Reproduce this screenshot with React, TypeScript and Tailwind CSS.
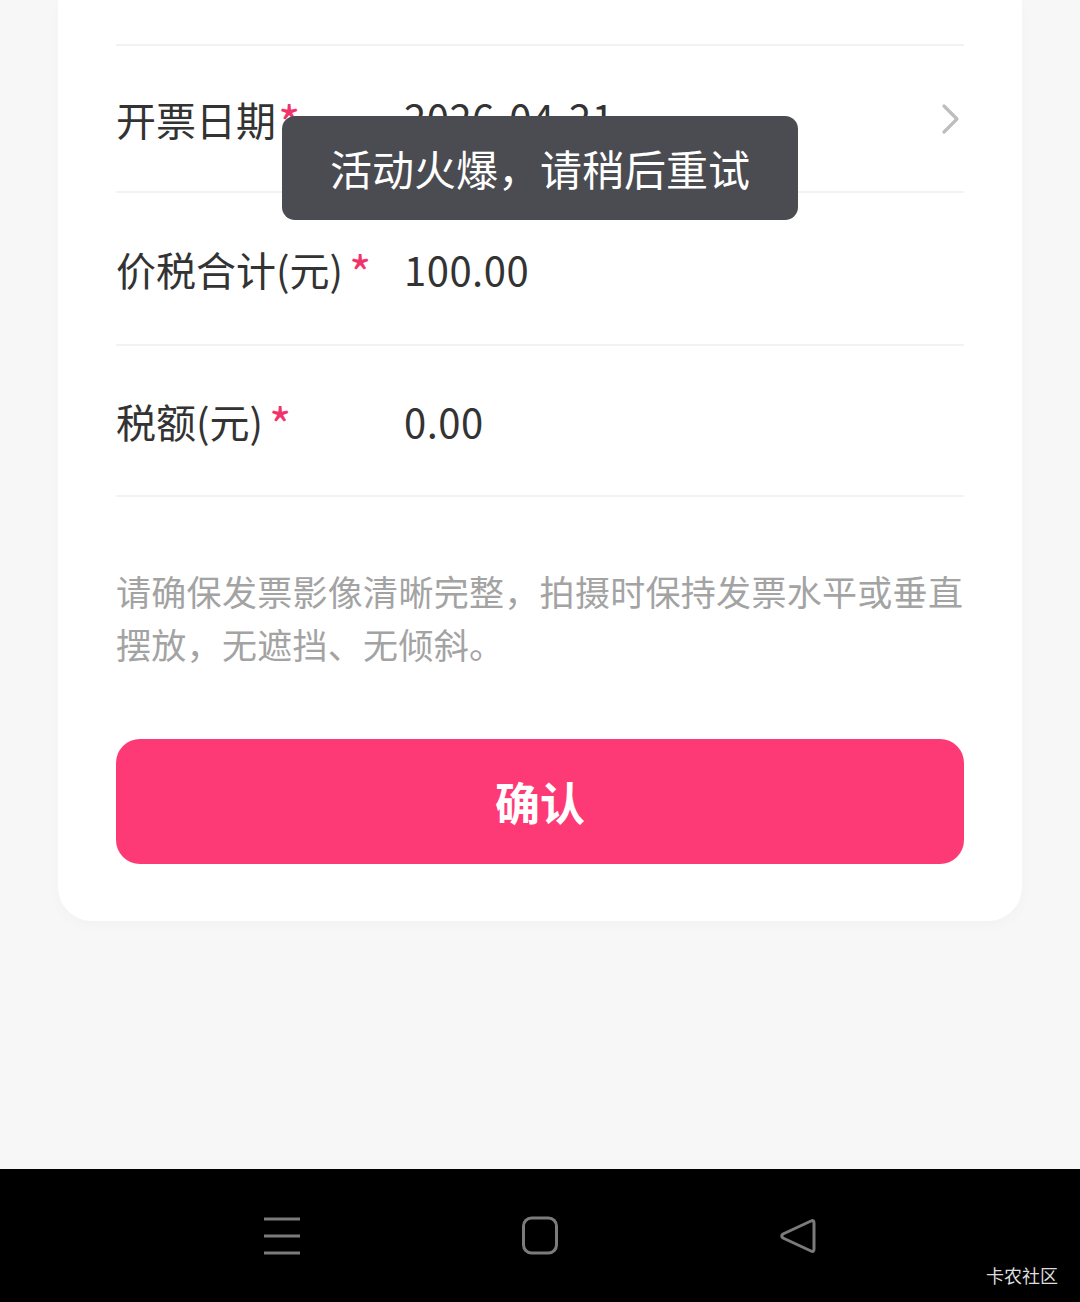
import React from 'react';

const FONT = { fontFamily: '"Noto Sans CJK SC", "Noto Sans", sans-serif' };

function Row({ label, value, tight, arrow, h }: { label: string; value: string; tight?: boolean; arrow?: boolean; h: string }) {
  return (
    <div className={`flex items-center border-b-2 border-[#f2f2f2] ${h}`}>
      <div className="w-[288px] shrink-0 text-[40px] text-[#333] leading-none flex items-center">
        <span>{label}</span>
        <span className={`text-[#f0336b] text-[48px] leading-none translate-y-[2px] ${tight ? 'ml-[2px]' : 'ml-[6px]'}`}>*</span>
      </div>
      <div className={`flex-1 text-[40px] text-[#333] leading-none tracking-[0.5px] ${arrow ? '-translate-y-[2px]' : ''}`}>{value}</div>
      {arrow && (
        <svg width="22" height="32" viewBox="0 0 22 32" className="mr-[2px]">
          <path d="M4 3 L17 16 L4 29" fill="none" stroke="#bdbdbd" strokeWidth="3.2" strokeLinecap="round" strokeLinejoin="round" />
        </svg>
      )}
    </div>
  );
}

export default function App() {
  return (
    <div className="w-[1080px] h-[1302px] flex flex-col bg-[#f7f7f7] relative overflow-hidden" style={FONT}>
      <div className="flex-1">
        <div className="mx-[58px] bg-white rounded-b-[34px] px-[58px] pb-[57px] shadow-[0_4px_14px_rgba(0,0,0,0.025)]">
          <div className="h-[46px] border-b-2 border-[#f2f2f2]" />
          <Row label="开票日期" value="2026-04-21" tight arrow h="h-[147px]" />
          <Row label="价税合计(元)" value="100.00" h="h-[153px]" />
          <Row label="税额(元)" value="0.00" h="h-[151px]" />

          <p className="mt-[67px] text-[35px] leading-[53px] text-[#a3a3a3] tracking-[0.3px]">
            请确保发票影像清晰完整，拍摄时保持发票水平或垂直摆放，无遮挡、无倾斜。
          </p>

          <button className="mt-[69px] w-full h-[125px] rounded-[24px] bg-[#fe3a76] text-white text-[45px] font-bold flex items-center justify-center">
            确认
          </button>
        </div>
      </div>

      {/* 底部导航栏 */}
      <div className="h-[133px] bg-black flex items-center justify-center relative">
        <div className="w-[258px] flex justify-center">
          <svg width="40" height="40" viewBox="0 0 40 40">
            <line x1="2" y1="3" x2="38" y2="3" stroke="#7b7b7b" strokeWidth="3" />
            <line x1="2" y1="20" x2="38" y2="20" stroke="#7b7b7b" strokeWidth="3" />
            <line x1="2" y1="37" x2="38" y2="37" stroke="#7b7b7b" strokeWidth="3" />
          </svg>
        </div>
        <div className="w-[258px] flex justify-center">
          <svg width="40" height="40" viewBox="0 0 40 40">
            <rect x="3.5" y="2" width="33" height="35" rx="8" fill="none" stroke="#7b7b7b" strokeWidth="3" />
          </svg>
        </div>
        <div className="w-[258px] flex justify-center">
          <svg width="40" height="40" viewBox="0 0 40 40">
            <path d="M33 5 Q36 3.5 36 7 L36 33 Q36 36.5 33 35 L5 22 Q2.5 20 5 18 Z" fill="none" stroke="#7b7b7b" strokeWidth="3" strokeLinejoin="round" />
          </svg>
        </div>
        <div className="absolute right-[22px] bottom-[18px] text-[18px] text-[#dddddd] leading-none">卡农社区</div>
      </div>

      {/* Toast */}
      <div className="absolute left-[282px] top-[116px] w-[516px] h-[104px] rounded-[13px] bg-[#4b4c51] flex items-center justify-center text-white text-[42px] leading-none">
        活动火爆，请稍后重试
      </div>
    </div>
  );
}
